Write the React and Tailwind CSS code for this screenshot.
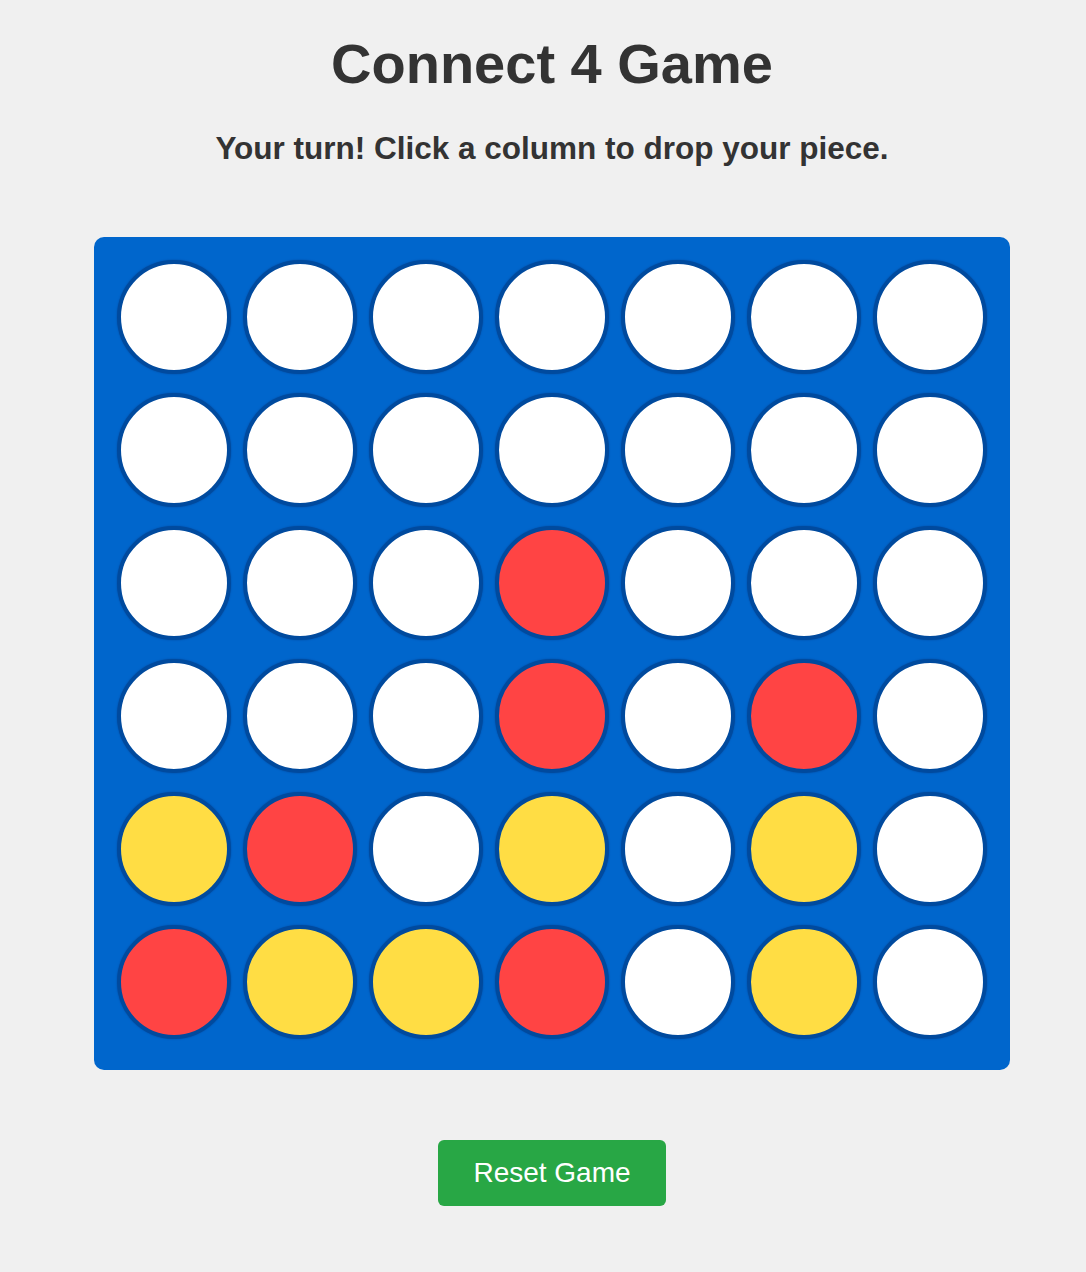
import React, { useState } from 'react';

const ROWS = 6;
const COLS = 7;

// board as seen in the screenshot (top row first)
const START = [
  [0, 0, 0, 0, 0, 0, 0],
  [0, 0, 0, 0, 0, 0, 0],
  [0, 0, 0, 1, 0, 0, 0],
  [0, 0, 0, 1, 0, 1, 0],
  [2, 1, 0, 2, 0, 2, 0],
  [1, 2, 2, 1, 0, 2, 0],
];

const cellColor = (v) => {
  if (v === 1) return 'bg-[#ff4444]';
  if (v === 2) return 'bg-[#ffdd44]';
  return 'bg-white';
};

const App = () => {
  const [board, setBoard] = useState(START);

  const dropPiece = (col) => {
    const next = board.map((r) => [...r]);
    for (let r = ROWS - 1; r >= 0; r--) {
      if (next[r][col] === 0) {
        next[r][col] = 1;
        setBoard(next);
        return;
      }
    }
  };

  const resetGame = () => {
    setBoard(Array.from({ length: ROWS }, () => Array(COLS).fill(0)));
  };

  return (
    <div
      className="min-h-screen bg-[#f0f0f0] text-[#333333] flex flex-col items-center pl-[18px]"
      style={{ fontFamily: '"Liberation Sans", Arial, sans-serif' }}
    >
      <h1 className="text-[56px] font-bold leading-none mt-[36px]">Connect 4 Game</h1>
      <p className="text-[31.5px] font-bold leading-none mt-[41px]">
        Your turn! Click a column to drop your piece.
      </p>

      {/* Board */}
      <div className="mt-[72px] w-[916px] bg-[#0066cc] rounded-[10px] px-[23px] pt-[23px] pb-[31px] grid grid-cols-7 gap-x-[12px] gap-y-[19px]">
        {board.map((row, r) =>
          row.map((v, c) => (
            <div
              key={`${r}-${c}`}
              onClick={() => dropPiece(c)}
              className={`w-[114px] h-[114px] rounded-full border-[4px] border-[#004a9e] shadow-[0_0_2px_#004a9e] cursor-pointer ${cellColor(v)}`}
            />
          ))
        )}
      </div>

      <button
        onClick={resetGame}
        className="mt-[70px] h-[66px] px-[35px] bg-[#28a745] text-white text-[28px] rounded-[6px] leading-none"
      >
        Reset Game
      </button>
    </div>
  );
};

export default App;
